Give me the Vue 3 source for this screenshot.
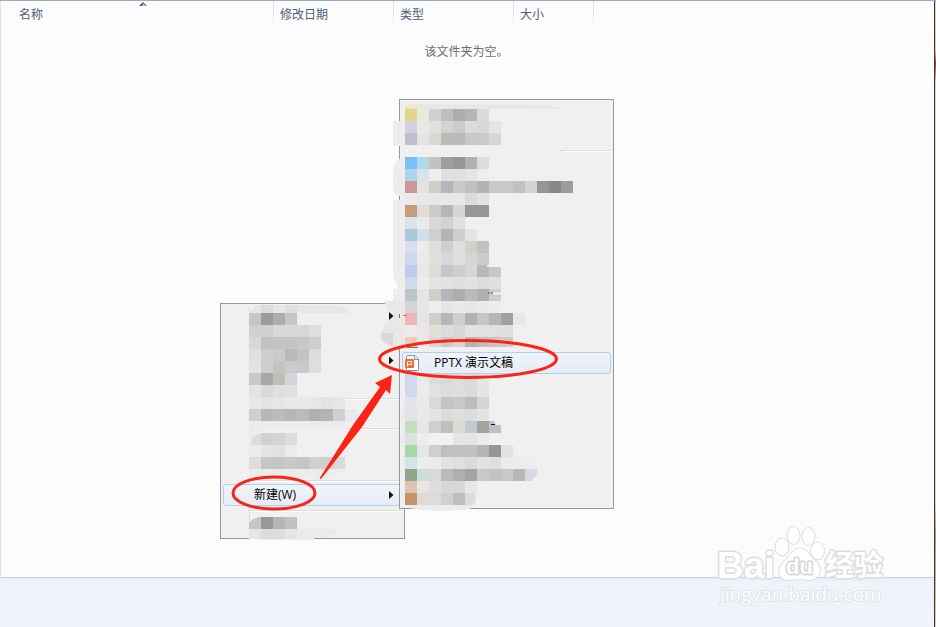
<script setup>
const CELL = 12

const columns = [
  { label: '名称', sorted: true },
  { label: '修改日期' },
  { label: '类型' },
  { label: '大小' }
]

// Turns rows of [y, 'hex hex ...'] into square cells; "-" leaves a gap.
function cells(left, rows) {
  return rows.flatMap(([y, line, height = CELL]) =>
    line.split(' ').map((c, i) => ({ x: left + i * CELL, y, h: height, fill: '#' + c }))
      .filter((c) => c.fill !== '#-')
  )
}

const contextTop = cells(249, [
  [313, 'c9c5c0 9a9b9e adadad c5c6c8'],
  [325, 'd1d0ce cfcfd0 d6d8da d6d8d9 d8d7d4 dddee0'],
  [337, 'd8d8d4 c0c2c4 c4c4c4 c4c4c4 c8c8c7 cdced0'],
  [349, 'e0e0e1 d0cecc cacac8 b9b9b9 c3c3c3 dbdcdf'],
  [361, 'e3e3e3 cfcecb c1c5c2 cccbc9 c9c9c9 dddee0'],
  [373, 'c9c8c6 a4a8a6 c1beb9 d2d6dc'],
  [385, 'e4e4e4 d9d9d9 dfdfdf e1e1e2'],
  [397, 'e8e8e8 e3e3e3 e5e5e5 e9e9e9 e9e9e9 e7e7e7 e3e3e3 e7e7e7'],
  [409, 'd1cfce b7b7b7 bcbcbb b5b6b6 bcbaba b0b0ae b5b5b4 cdd1d5 e9eaeb'],
  [433, '- cfd0d0 d6d5d3 dcdddf'],
  [445, 'ebebeb e6e5e3 e0e0e0 ececec'],
  [457, 'dfdedb c5c6c5 c5c5c5 cac9c7 c6c5c3 d0d0d0 cfcfce d8d9db']
])

const contextBottom = cells(249, [
  [517, '- 989899 b9b5b0 bec2c7'],
  [529, 'e6e6e4 dcdcdc dcdddd e5e5e5', 10]
])

const newTop = cells(405, [
  [109, 'e3d587 e9e9dd d2d1cf bcbfc0 adadad b5b5b5 dadada'],
  [121, 'd2d1e0 e8e8e8 e2e0de d1d3d1 cbcbcb dcdbd9 d6d8da e3e6e5'],
  [133, 'bebdd1 e4e4e4 d9d8d4 b9bcb8 b8babc c8c8c8 cacaca d4d6d8'],
  [157, '75c3f3 b0d8ee c5c1bc 9d9ea0 969695 afb0af dbdcdd'],
  [169, 'afd3e8 d6e5ed efefed e1e1e1 e0e0e0 e4e4e4 ededed'],
  [181, 'cc9799 e4e3e4 cfcec9 b4b6b9 c9c9c7 c0c0c0 b3b3b1 c8c8c9 c8c8c7 c2c1c0 d2d3d5 959593 888888 9c9c9c'],
  [193, 'ebebeb e9e9e9 e8e8e8 e8e8e8 e8e8e8 dadada e2e2e2'],
  [205, 'c59d7d e1dcd8 cccccb b6b6b7 d5d7d6 979797 969695'],
  [217, 'dde4e7 e7ebed dad7d5 d1d3d2 dfe1e0'],
  [229, 'a9c8d9 d1dfe8 d0cece b4b4b4 cccecd e4e5e7'],
  [241, 'd7deec eaedec e1dfdc d0d0d3 e0e0e0 d1d0cd c0c2c1'],
  [253, 'cfd8ed e9eae9 e2e0dd d7d8da e0e0e0 d6d5d2 cacccb'],
  [265, 'bdccea e8e8e8 dcdbd5 c6c7cc d0cdcb d7d7d8 b9b9b9 c5cac9'],
  [277, 'd1daed eaedec e4e4e4 e2e2e2 dfdfdf e2e2e2 dddddd e0e0e0'],
  [289, 'b8c5ca e6e6e6 d1cfcc b3b5b8 adadad bbbab8 afafaf cccfd2'],
  [301, 'd3d6d4 e6e6e6 edf0ee e6e6e6 eaeaea e7e7e7 eaeaea ededed'],
  [313, 'f1b4b5 e6e6e6 d1cfcc b5b7bb d0cfcc b3b1b2 c4c7c6 b8b6b4 a5a09b e4e8ed'],
  [325, 'ebebeb e8e8e8 e3e0dc dcdcdc d7d7d7 e3e3e3 e1e1e1 e0e0e0 dedede'],
  [337, 'f0cbbb e8e8e8 dbd9d6 cacaca d7d6d1 b5b3b4 bebebd c8c6c3 cccbc9', 10]
])

const newBottom = cells(405, [
  [374, 'd1daed e9eaea dcdddd d9d9d9 dcdcdc d9d9d9 e3e5e7', 11],
  [385, 'd1daed ebedec e2e2e2 dddddd dedede dbdbdb e4e4e4'],
  [397, 'e3e4e7 e8eae9 dad9d6 c3c3c3 c8c8c7 bcbcbc d4d5d7'],
  [409, 'e1e3e6 e8eae9 e4e4e3 dbdddd dddede dcdcdc e3e5e4'],
  [421, 'c1dec0 e6e6e6 cfcfcd bfbfbc dfdad6 c4c8d0 a5a4a0 bdc2c8'],
  [433, 'dbe1db ededed f1f1f1 f1f1f1 e3e5e7 e1e5e5 ebebeb'],
  [445, 'a5d8a7 e6e6e6 d0cfcd bfbfbb c0c0c6 c3c1bf b5b5b5 979695 dfe3e8'],
  [457, 'd4e2e9 e9eeee ebebeb e2e2e2 dfdfdd dadada e2e2e2 dfdfdf ebebeb ececea ebedf0'],
  [469, '90a68b cbdeda d8dad8 bcbab8 afb0ad a3a3a1 c8c9ce c2c2c2 cac8c5 b8b7b5'],
  [481, 'dbc5b3 e8e6e3 e0dedb d7d8d8 d7d8d8 e6e7e7'],
  [493, 'c4936a dedbd3 dddcd9 d0d0d1 c0bebe']
])
</script>

<template>
  <div class="window">
    <main class="list">
      <header class="columns">
        <button v-for="c in columns" :key="c.label" class="column" type="button">
          {{ c.label }}
          <svg v-if="c.sorted" class="sort" width="8" height="4" viewBox="0 0 8 4" aria-hidden="true">
            <path d="M0 4 4 0 8 4Z" fill="#3f6478" />
            <path d="M3 4 4.500 1.500 7 4Z" fill="#9fd8ee" />
          </svg>
        </button>
      </header>
      <p class="empty">该文件夹为空。</p>
    </main>
    <footer class="details"></footer>
    <div class="edge"></div>

    <nav class="menu context">
      <svg class="segment" width="183" height="180" viewBox="221 304 183 180" aria-hidden="true">
        <path d="M249.500 306V484" stroke="#dedede" />
        <path d="M250.500 306V484" stroke="#fff" />
        <path d="M326 398.500H402M250 428.500H402M250 480.500H402" stroke="#dcdcdc" />
        <path d="M326 399.500H402M250 429.500H402M250 481.500H402" stroke="#fff" />
        <path d="M249 313Q254 305 262 305H335Q350 308 351 313Z" fill="#e7e7e7" />
        <path d="M261 305h12v8h-12z" fill="#dcdcdc" />
        <path d="M285 305h12v8h-12z" fill="#dfdfdf" />
        <path d="M249 421H346V430H260L249 445Z" fill="#ececec" />
        <path d="M250 445Q253 434 261 433V445Z" fill="#dcdcda" />
        <path d="M249 469H345Q338 477 320 478H249Z" fill="#ececec" />
        <rect v-for="(c, i) in contextTop" :key="i" :x="c.x" :y="c.y" width="12" :height="c.h" :fill="c.fill" shape-rendering="crispEdges" />
      </svg>
      <button class="item parent" type="button">
        新建(W)
        <svg width="5" height="8" viewBox="0 0 5 8" aria-hidden="true"><path d="M0 0 4.500 4 0 8Z" fill="#111" /></svg>
      </button>
      <svg class="segment" width="183" height="32" viewBox="221 506 183 32" aria-hidden="true">
        <path d="M249.500 506V536" stroke="#dedede" />
        <path d="M250 510.500H402" stroke="#dcdcdc" />
        <path d="M250 511.500H402" stroke="#fff" />
        <path d="M249 529H338Q336 536 322 538H314V540H262Q252 540 249 535Z" fill="#ebebeb" />
        <path d="M249 529V523Q254 517 261 517V529Z" fill="#c9c5c1" />
        <rect v-for="(c, i) in contextBottom" :key="i" :x="c.x" :y="c.y" width="12" :height="c.h" :fill="c.fill" shape-rendering="crispEdges" />
      </svg>
    </nav>

    <nav class="menu new">
      <svg class="segment" width="213" height="252" viewBox="400 100 213 252" aria-hidden="true">
        <path d="M428.500 102V352" stroke="#e2e2e2" />
        <path d="M429.500 102V352" stroke="#fff" />
        <path d="M560 150.500H611" stroke="#dcdcdc" />
        <path d="M564 151.500H611" stroke="#fff" />
        <path d="M405 109V107L412 104 550 105Q562 107 563 109Z" fill="#e7e7e7" />
        <path d="M405 109V106L412 104H429V109Z" fill="#eae8d2" />
        <path d="M393 121H405V146H393Z" fill="#ededed" />
        <path d="M405 158H401Q393 163 393 170V191Q394 195 400 196H405Z" fill="#ededed" />
        <path d="M393 200H405V301H393V289H397Q398 282 393 278Z" fill="#ededed" />
        <path d="M384 301H405V346H392Q381 344 381 336 382 326 389 320V313Z" fill="#e8e8e8" />
        <path d="M387 313H393V320H387Z" fill="#f0f0f0" />
        <path d="M381 333H393V346Q384 344 381 339Z" fill="#d9d9d9" />
        <path d="M405 145H560V157H405Z" fill="#f0f0f0" />
        <rect v-for="(c, i) in newTop" :key="i" :x="c.x" :y="c.y" width="12" :height="c.h" :fill="c.fill" shape-rendering="crispEdges" />
        <path d="M487 266H501" stroke="#f0f0f0" stroke-width="2" />
        <path d="M493 293.500H501" stroke="#f5f5f5" stroke-width="2" />
        <path d="M488 293H494" stroke="#555" stroke-dasharray="2 1" />
        <path d="M389 312 393.500 316 389 320Z" fill="#111" />
        <path d="M399.500 314V318" stroke="#777" />
        <path d="M403 315.500H407" stroke="#e66066" />
        <path d="M407 347.500H418" stroke="#777" />
      </svg>
      <button class="item pptx" type="button">
        <svg width="15" height="16" viewBox="0 0 15 16" aria-hidden="true">
          <path d="M1.500 1.500Q1.500 .5 2.500 .5H10L13.500 4V14.500Q13.500 15.500 12.500 15.500H2.500Q1.500 15.500 1.500 14.500Z" fill="#fff" stroke="#8c8c8c" />
          <path d="M9.500 .5V4.500H13.500" fill="#eee" stroke="#8c8c8c" />
          <rect x="0" y="4" width="9" height="9" rx="1" fill="#f36a2d" />
          <path d="M2.500 11.500V6.500H6.500V9.500H3" fill="none" stroke="#fff" stroke-width="1" />
        </svg>
        PPTX 演示文稿
      </button>
      <svg class="segment" width="213" height="134" viewBox="400 374 213 134" aria-hidden="true">
        <path d="M405 397Q402 402 402 412V445L405 500Q408 509 416 509 430 512 467 510 476 507 476 497V493H405Z" fill="#ececec" />
        <path d="M490 374H505L501 379H489Z" fill="#e2e9f2" />
        <rect v-for="(c, i) in newBottom" :key="i" :x="c.x" :y="c.y" width="12" :height="c.h" :fill="c.fill" shape-rendering="crispEdges" />
        <path d="M525 469H537V474L532 481H525Z" fill="#d4dae0" />
        <path d="M465 493H475Q477 500 473 505H465Z" fill="#dadcde" />
        <path d="M494 421H501V425H496Z" fill="#efefef" />
        <path d="M491 424.500H495" stroke="#111" />
      </svg>
    </nav>

    <svg class="marks" width="936" height="627" viewBox="0 0 936 627" aria-hidden="true">
      <path d="M389 356.500 393.500 360.500 389 364.500Z" fill="#111" />
      <g fill="none" stroke="#fb2313" stroke-width="3">
        <ellipse cx="468" cy="359" rx="88.500" ry="18.500" />
        <ellipse cx="274" cy="493" rx="41" ry="16" />
      </g>
      <path d="M319.500 478.500 353 425 380 387 375 383 392 375 390 394 386 390 362 427 321 479Z" fill="#fb2313" />
    </svg>

    <svg class="watermark" width="176" height="90" viewBox="714 522 176 90" role="img" aria-label="Baidu 经验">
      <g fill="#fff" stroke="#dcdee1" stroke-width="3" paint-order="stroke" stroke-linejoin="round">
        <text class="latin" x="717" y="578" font-size="37">Bai</text>
        <text class="han" x="825" y="576" font-size="29">经验</text>
        <g stroke-width="2">
          <ellipse cx="782" cy="547" rx="6.500" ry="8.500" />
          <ellipse cx="793.500" cy="535.500" rx="6" ry="8.500" />
          <ellipse cx="808.500" cy="536.500" rx="6" ry="8.500" />
          <ellipse cx="817.500" cy="551" rx="6.500" ry="8.500" />
          <path d="M800 548.500C792 548.500 790 557 784 562 777 568 777 579 788 580 793 580 796 579 800 579 805 579 809 581 814 579 823 575 821 566 815 561 809 556 808 548.500 800 548.500Z" />
        </g>
        <text class="latin" x="786" y="574" font-size="22" stroke="#d2d4d8">du</text>
        <text class="site" x="720" y="601" font-size="19" stroke="#dfe2e8" stroke-width="2">jingyan.baidu.com</text>
      </g>
    </svg>
  </div>
</template>

<style>
body {
  margin: 0;
  background: #fcfcfc;
}
</style>

<style scoped>
.window {
  position: relative;
  display: flex;
  flex-direction: column;
  min-height: 100vh;
  overflow: hidden;
  box-sizing: border-box;
  border-top: 1px solid #9caac5;
  font: 12px/16px "Open Sans", "Noto Sans CJK SC", sans-serif;
}

.list {
  flex: 1;
  border-left: 1px solid #d5e2f2;
  background: #fcfcfc;
}

.columns {
  display: grid;
  grid-template-columns: 273px 120px 120px 80px;
}

.column {
  position: relative;
  height: 24px;
  padding: 4px 6px 0;
  border: 0;
  border-right: 1px solid;
  border-image: linear-gradient(#dbe6f3 60%, #fcfcfc) 1;
  background: none;
  color: #4c607a;
  font: inherit;
  text-align: left;
}

.column:first-child {
  padding-left: 18px;
}

.sort {
  position: absolute;
  top: 1px;
  left: 138px;
}

.empty {
  margin: 19px 4px 0 0;
  color: #6d6d6d;
  text-align: center;
}

.details {
  height: 49px;
  border-top: 1px solid #c5d3e4;
  background: linear-gradient(#e6edf7, #f0f3fb 4px);
}

.edge {
  position: absolute;
  top: 0;
  right: 0;
  bottom: 0;
  width: 1px;
  border-left: 1px solid #3c3b2b;
  background: linear-gradient(#d9d7bb, #d0cbb2 8%, #a0302c 10%, #d5d8c4 13%, #d8d8c8 80%, #a79b84 85%, #d8d0c0);
}

.menu {
  position: absolute;
  display: flex;
  flex-direction: column;
  border: 1px solid #979797;
  background: #f0f0f0;
}

.context {
  top: 302px;
  left: 220px;
}

.new {
  top: 98px;
  left: 399px;
}

.segment {
  display: block;
  overflow: visible;
}

.item {
  display: flex;
  align-items: center;
  height: 22px;
  margin: 0 2px;
  padding: 0 7px 0 2px;
  border: 1px solid #aecff7;
  border-radius: 3px;
  background: linear-gradient(#f0f3f8, #e6edf6);
  color: #000;
  font: inherit;
}

.parent {
  justify-content: space-between;
  padding-left: 30px;
}

.pptx {
  gap: 14px;
}

.marks {
  position: absolute;
  top: -1px;
  left: 0;
  pointer-events: none;
}

.watermark {
  position: absolute;
  right: 46px;
  bottom: 15px;
}

.latin {
  font-family: "Liberation Sans", sans-serif;
  font-weight: 700;
}

.han {
  font-family: "Noto Sans CJK SC", sans-serif;
  font-weight: 700;
}

.site {
  font-family: "Open Sans", sans-serif;
}
</style>
